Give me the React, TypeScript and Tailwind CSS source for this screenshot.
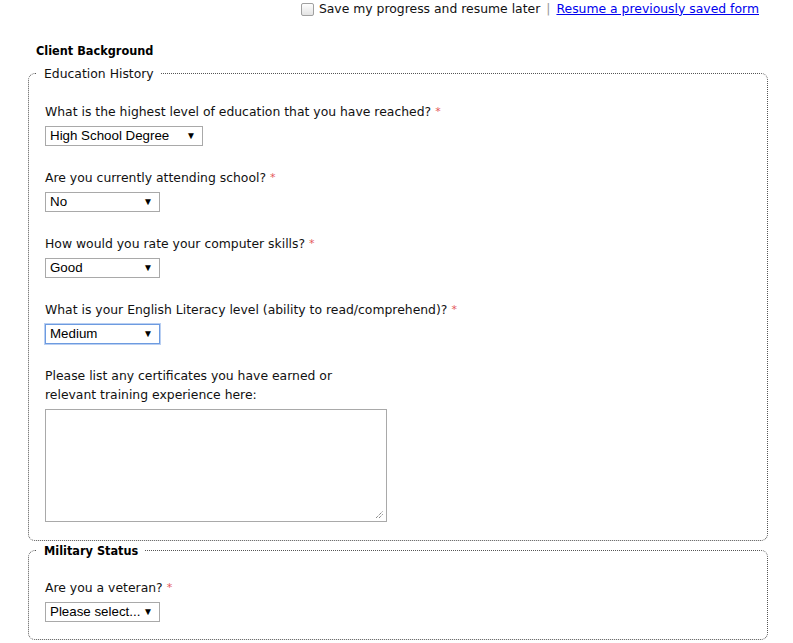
import React from 'react';

const Req = () => <span className="ml-[4px] text-[11px] align-top text-[#e4575a]">*</span>;

function FakeSelect({ value, width, focused }: { value: string; width: number; focused?: boolean }) {
  return (
    <div
      style={{ width }}
      className={`flex h-[20px] items-center justify-between whitespace-nowrap bg-white pl-[4px] pr-[6px] font-['Liberation_Sans',Arial,sans-serif] text-[13.33px] text-black ${
        focused ? 'border border-[#6d9be0] shadow-[0_0_0_1px_#b9cff2]' : 'border border-[#a9a9a9]'
      }`}
    >
      <span className="leading-none">{value}</span>
      <span className="text-[10px] leading-none">▼</span>
    </div>
  );
}

function Question({ label, children }: { label: React.ReactNode; children: React.ReactNode }) {
  return (
    <div className="mb-[22px]">
      <div className="mb-[5px] leading-[19px]">{label}</div>
      {children}
    </div>
  );
}

const boldFont = "font-['DejaVu_Sans_Condensed','DejaVu_Sans',Tahoma,sans-serif] text-[12.6px] font-bold text-black";

export default function App() {
  return (
    <div className="min-h-[643px] w-[793px] bg-white font-['DejaVu_Sans',Verdana,sans-serif] text-[12.4px] text-[#111]">
      {/* top save bar */}
      <div className="flex h-[17px] items-center justify-end pr-[34px] pt-[1px]">
        <span className="mr-[5px] inline-block h-[13px] w-[13px] rounded-[2px] border border-[#a0a0a0] bg-gradient-to-b from-[#fdfdfd] to-[#e4e4e4]"></span>
        <span>Save my progress and resume later</span>
        <span className="mx-[6px] text-[#999]">|</span>
        <a href="#" className="text-[#0000ee] underline">Resume a previously saved form</a>
      </div>

      <div className="ml-[28px] w-[740px]">
        <h3 className={`mt-[25px] ml-[8px] leading-[17px] ${boldFont}`}>Client Background</h3>

        <fieldset className="mt-[6px] rounded-[7px] border border-dotted border-[#555] px-[16px] pt-[20px] pb-[18px]">
          <legend className="ml-[-8px] px-[7px] leading-[17px]">Education History</legend>

          <Question label={<>What is the highest level of education that you have reached?<Req /></>}>
            <FakeSelect value="High School Degree" width={158} />
          </Question>
          <Question label={<>Are you currently attending school?<Req /></>}>
            <FakeSelect value="No" width={115} />
          </Question>
          <Question label={<>How would you rate your computer skills?<Req /></>}>
            <FakeSelect value="Good" width={115} />
          </Question>
          <Question label={<>What is your English Literacy level (ability to read/comprehend)?<Req /></>}>
            <FakeSelect value="Medium" width={115} focused />
          </Question>

          <div className="leading-[19px]">
            Please list any certificates you have earned or
            <br />
            relevant training experience here:
          </div>
          <div className="relative mt-[5px] h-[113px] w-[342px] border border-[#a9a9a9] bg-white">
            <svg className="absolute right-[2px] bottom-[2px]" width="9" height="9" viewBox="0 0 9 9">
              <path d="M1 8 L8 1 M4 8 L8 4" stroke="#555" strokeWidth="1" strokeDasharray="1 1" />
            </svg>
          </div>
        </fieldset>

        <fieldset className="mt-[1px] rounded-[7px] border border-dotted border-[#555] px-[16px] pt-[19px] pb-[17px]">
          <legend className={`ml-[-8px] px-[7px] leading-[17px] ${boldFont}`}>Military Status</legend>
          <div className="mb-[5px] leading-[19px]">Are you a veteran?<Req /></div>
          <FakeSelect value="Please select..." width={115} />
        </fieldset>
      </div>
    </div>
  );
}
